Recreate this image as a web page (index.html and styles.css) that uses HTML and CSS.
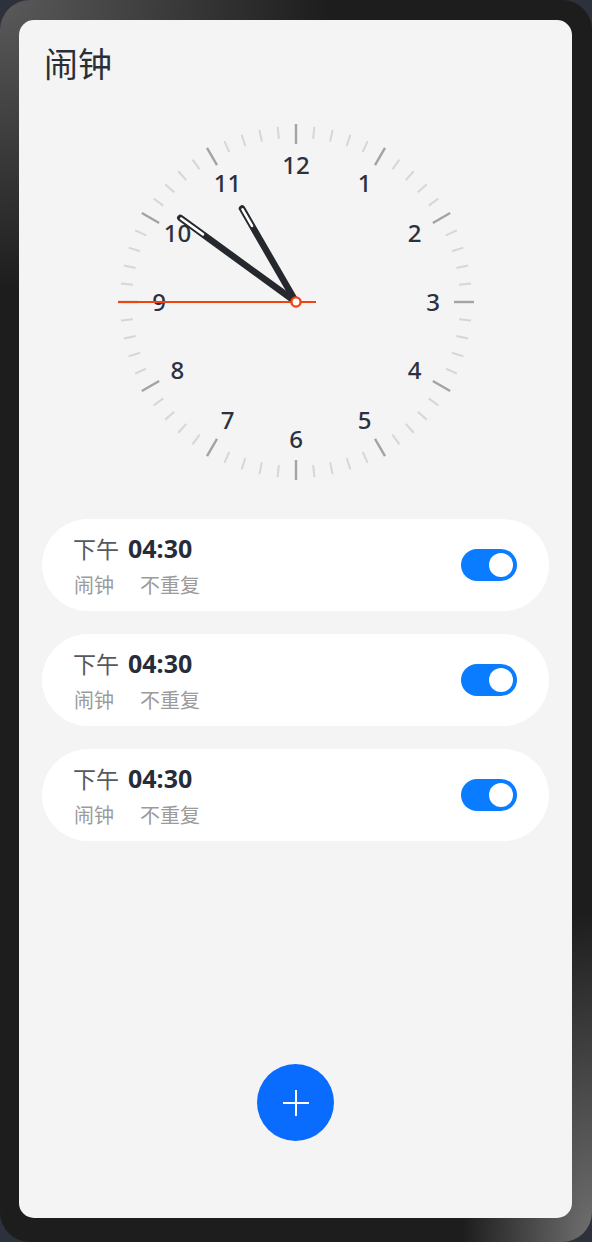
FILE: index.html
```html
<!DOCTYPE html>
<html lang="zh-CN">
<head>
<meta charset="utf-8">
<title>闹钟</title>
<link rel="stylesheet" href="styles.css">
</head>
<body>
<div class="device">
  <main class="screen">
    <h1 class="title">闹钟</h1>

    <div class="clock">
      <svg width="360" height="360" viewBox="0 0 360 360">
        <g class="ticks-minor">
          <line x1="180" y1="4" x2="180" y2="16" transform="rotate(6 180 180)"/>
          <line x1="180" y1="4" x2="180" y2="16" transform="rotate(12 180 180)"/>
          <line x1="180" y1="4" x2="180" y2="16" transform="rotate(18 180 180)"/>
          <line x1="180" y1="4" x2="180" y2="16" transform="rotate(24 180 180)"/>
          <line x1="180" y1="4" x2="180" y2="16" transform="rotate(36 180 180)"/>
          <line x1="180" y1="4" x2="180" y2="16" transform="rotate(42 180 180)"/>
          <line x1="180" y1="4" x2="180" y2="16" transform="rotate(48 180 180)"/>
          <line x1="180" y1="4" x2="180" y2="16" transform="rotate(54 180 180)"/>
          <line x1="180" y1="4" x2="180" y2="16" transform="rotate(66 180 180)"/>
          <line x1="180" y1="4" x2="180" y2="16" transform="rotate(72 180 180)"/>
          <line x1="180" y1="4" x2="180" y2="16" transform="rotate(78 180 180)"/>
          <line x1="180" y1="4" x2="180" y2="16" transform="rotate(84 180 180)"/>
          <line x1="180" y1="4" x2="180" y2="16" transform="rotate(96 180 180)"/>
          <line x1="180" y1="4" x2="180" y2="16" transform="rotate(102 180 180)"/>
          <line x1="180" y1="4" x2="180" y2="16" transform="rotate(108 180 180)"/>
          <line x1="180" y1="4" x2="180" y2="16" transform="rotate(114 180 180)"/>
          <line x1="180" y1="4" x2="180" y2="16" transform="rotate(126 180 180)"/>
          <line x1="180" y1="4" x2="180" y2="16" transform="rotate(132 180 180)"/>
          <line x1="180" y1="4" x2="180" y2="16" transform="rotate(138 180 180)"/>
          <line x1="180" y1="4" x2="180" y2="16" transform="rotate(144 180 180)"/>
          <line x1="180" y1="4" x2="180" y2="16" transform="rotate(156 180 180)"/>
          <line x1="180" y1="4" x2="180" y2="16" transform="rotate(162 180 180)"/>
          <line x1="180" y1="4" x2="180" y2="16" transform="rotate(168 180 180)"/>
          <line x1="180" y1="4" x2="180" y2="16" transform="rotate(174 180 180)"/>
          <line x1="180" y1="4" x2="180" y2="16" transform="rotate(186 180 180)"/>
          <line x1="180" y1="4" x2="180" y2="16" transform="rotate(192 180 180)"/>
          <line x1="180" y1="4" x2="180" y2="16" transform="rotate(198 180 180)"/>
          <line x1="180" y1="4" x2="180" y2="16" transform="rotate(204 180 180)"/>
          <line x1="180" y1="4" x2="180" y2="16" transform="rotate(216 180 180)"/>
          <line x1="180" y1="4" x2="180" y2="16" transform="rotate(222 180 180)"/>
          <line x1="180" y1="4" x2="180" y2="16" transform="rotate(228 180 180)"/>
          <line x1="180" y1="4" x2="180" y2="16" transform="rotate(234 180 180)"/>
          <line x1="180" y1="4" x2="180" y2="16" transform="rotate(246 180 180)"/>
          <line x1="180" y1="4" x2="180" y2="16" transform="rotate(252 180 180)"/>
          <line x1="180" y1="4" x2="180" y2="16" transform="rotate(258 180 180)"/>
          <line x1="180" y1="4" x2="180" y2="16" transform="rotate(264 180 180)"/>
          <line x1="180" y1="4" x2="180" y2="16" transform="rotate(276 180 180)"/>
          <line x1="180" y1="4" x2="180" y2="16" transform="rotate(282 180 180)"/>
          <line x1="180" y1="4" x2="180" y2="16" transform="rotate(288 180 180)"/>
          <line x1="180" y1="4" x2="180" y2="16" transform="rotate(294 180 180)"/>
          <line x1="180" y1="4" x2="180" y2="16" transform="rotate(306 180 180)"/>
          <line x1="180" y1="4" x2="180" y2="16" transform="rotate(312 180 180)"/>
          <line x1="180" y1="4" x2="180" y2="16" transform="rotate(318 180 180)"/>
          <line x1="180" y1="4" x2="180" y2="16" transform="rotate(324 180 180)"/>
          <line x1="180" y1="4" x2="180" y2="16" transform="rotate(336 180 180)"/>
          <line x1="180" y1="4" x2="180" y2="16" transform="rotate(342 180 180)"/>
          <line x1="180" y1="4" x2="180" y2="16" transform="rotate(348 180 180)"/>
          <line x1="180" y1="4" x2="180" y2="16" transform="rotate(354 180 180)"/>
        </g>
        <g class="ticks-major">
          <line x1="180" y1="2" x2="180" y2="22"/>
          <line x1="180" y1="2" x2="180" y2="22" transform="rotate(30 180 180)"/>
          <line x1="180" y1="2" x2="180" y2="22" transform="rotate(60 180 180)"/>
          <line x1="180" y1="2" x2="180" y2="22" transform="rotate(90 180 180)"/>
          <line x1="180" y1="2" x2="180" y2="22" transform="rotate(120 180 180)"/>
          <line x1="180" y1="2" x2="180" y2="22" transform="rotate(150 180 180)"/>
          <line x1="180" y1="2" x2="180" y2="22" transform="rotate(180 180 180)"/>
          <line x1="180" y1="2" x2="180" y2="22" transform="rotate(210 180 180)"/>
          <line x1="180" y1="2" x2="180" y2="22" transform="rotate(240 180 180)"/>
          <line x1="180" y1="2" x2="180" y2="22" transform="rotate(270 180 180)"/>
          <line x1="180" y1="2" x2="180" y2="22" transform="rotate(300 180 180)"/>
          <line x1="180" y1="2" x2="180" y2="22" transform="rotate(330 180 180)"/>
        </g>
        <g class="numbers">
          <text x="180" y="52">12</text>
          <text x="248.5" y="70">1</text>
          <text x="298.6" y="120">2</text>
          <text x="317" y="188.5">3</text>
          <text x="298.6" y="257">4</text>
          <text x="248.5" y="307">5</text>
          <text x="180" y="325.5">6</text>
          <text x="111.5" y="307">7</text>
          <text x="61.4" y="257">8</text>
          <text x="43" y="188.5">9</text>
          <text x="61.4" y="120">10</text>
          <text x="111.5" y="70">11</text>
        </g>
        <g class="hand" transform="rotate(306 180 180)">
          <line class="hand-body" x1="180" y1="180" x2="180" y2="37"/>
          <line class="hand-inner" x1="180" y1="65" x2="180" y2="38"/>
        </g>
        <g class="hand" transform="rotate(330 180 180)">
          <line class="hand-body" x1="180" y1="180" x2="180" y2="72"/>
          <line class="hand-inner" x1="180" y1="92" x2="180" y2="73"/>
        </g>
        <line class="second" x1="2" y1="180" x2="200" y2="180"/>
        <circle class="pivot" cx="180" cy="180" r="4.6"/>
      </svg>
    </div>

    <section class="alarms">
      <article class="alarm">
        <div class="alarm-text">
          <div class="alarm-time"><span class="period">下午</span><span class="time">04:30</span></div>
          <div class="alarm-meta"><span>闹钟</span><span>不重复</span></div>
        </div>
        <div class="toggle"><span class="knob"></span></div>
      </article>
      <article class="alarm">
        <div class="alarm-text">
          <div class="alarm-time"><span class="period">下午</span><span class="time">04:30</span></div>
          <div class="alarm-meta"><span>闹钟</span><span>不重复</span></div>
        </div>
        <div class="toggle"><span class="knob"></span></div>
      </article>
      <article class="alarm">
        <div class="alarm-text">
          <div class="alarm-time"><span class="period">下午</span><span class="time">04:30</span></div>
          <div class="alarm-meta"><span>闹钟</span><span>不重复</span></div>
        </div>
        <div class="toggle"><span class="knob"></span></div>
      </article>
    </section>

    <button class="fab" type="button" aria-label="添加闹钟">
      <svg width="28" height="28" viewBox="0 0 28 28"><path d="M14 1v26M1 14h26" stroke="#fff" stroke-width="2" fill="none"/></svg>
    </button>
  </main>
</div>
</body>
</html>
```

FILE: styles.css
```css
* { box-sizing: border-box; }

html, body {
  margin: 0;
  padding: 0;
  background: #2c313b;
}

body {
  width: 592px;
  height: 1242px;
  font-family: "Noto Sans CJK SC", "Noto Sans", sans-serif;
}

.device {
  width: 592px;
  height: 1242px;
  border-radius: 30px;
  padding: 20px 20px 24px 19px;
  background:
    radial-gradient(ellipse 330px 290px at 0 0, #5a5a5a 0%, rgba(29, 29, 29, 0) 100%),
    radial-gradient(ellipse 130px 330px at 100% 100%, #707070 0%, rgba(29, 29, 29, 0) 100%),
    #1d1d1d;
}

.screen {
  height: 1198px;
  background: #f4f4f4;
  border-radius: 15px;
  display: flex;
  flex-direction: column;
  overflow: hidden;
}

.title {
  margin: 0;
  padding: 21px 25px 0;
  height: 65px;
  font-size: 34px;
  line-height: 44px;
  font-weight: 400;
  color: #2a2f37;
}

.clock {
  margin-top: 37px;
  display: flex;
  justify-content: center;
}

.clock svg { display: block; }

.ticks-minor line {
  stroke: #d6d6d6;
  stroke-width: 2;
}

.ticks-major line {
  stroke: #a3a3a3;
  stroke-width: 2.4;
}

.numbers text {
  font-family: "Noto Sans", "Roboto", sans-serif;
  font-size: 24px;
  font-weight: 500;
  fill: #2a3140;
  text-anchor: middle;
}

.hand-body {
  stroke: #25282d;
  stroke-width: 6.5;
  stroke-linecap: round;
}

.hand-inner {
  stroke: #ffffff;
  stroke-width: 2.6;
  stroke-linecap: round;
}

.second {
  stroke: #f1430f;
  stroke-width: 2;
}

.pivot {
  fill: #ffffff;
  stroke: #f1430f;
  stroke-width: 2.4;
}

.alarms {
  margin: 37px 23px 0;
  display: flex;
  flex-direction: column;
  gap: 23px;
}

.alarm {
  height: 92px;
  background: #ffffff;
  border-radius: 46px;
  padding: 0 32px;
  display: flex;
  align-items: center;
  justify-content: space-between;
}

.alarm-text {
  display: flex;
  flex-direction: column;
  padding-top: 3px;
}

.alarm-time {
  display: flex;
  align-items: baseline;
  gap: 9px;
  line-height: 30px;
}

.period {
  font-size: 23px;
  color: #555a60;
  margin-left: -1px;
}

.time {
  font-family: "Noto Sans", "Roboto", sans-serif;
  font-size: 25px;
  font-weight: 700;
  color: #262d39;
}

.alarm-meta {
  margin-top: 7px;
  display: flex;
  gap: 26px;
  font-size: 20px;
  line-height: 30px;
  color: #9b9b9b;
}

.toggle {
  width: 56px;
  height: 32px;
  border-radius: 16px;
  background: #0a7cff;
  display: flex;
  align-items: center;
  justify-content: flex-end;
  padding: 0 4px;
}

.knob {
  width: 24px;
  height: 24px;
  border-radius: 50%;
  background: #ffffff;
}

.fab {
  margin: auto auto 77px;
  width: 77px;
  height: 77px;
  border: none;
  border-radius: 50%;
  background: #0a6cff;
  display: flex;
  align-items: center;
  justify-content: center;
  padding: 0;
}
```
